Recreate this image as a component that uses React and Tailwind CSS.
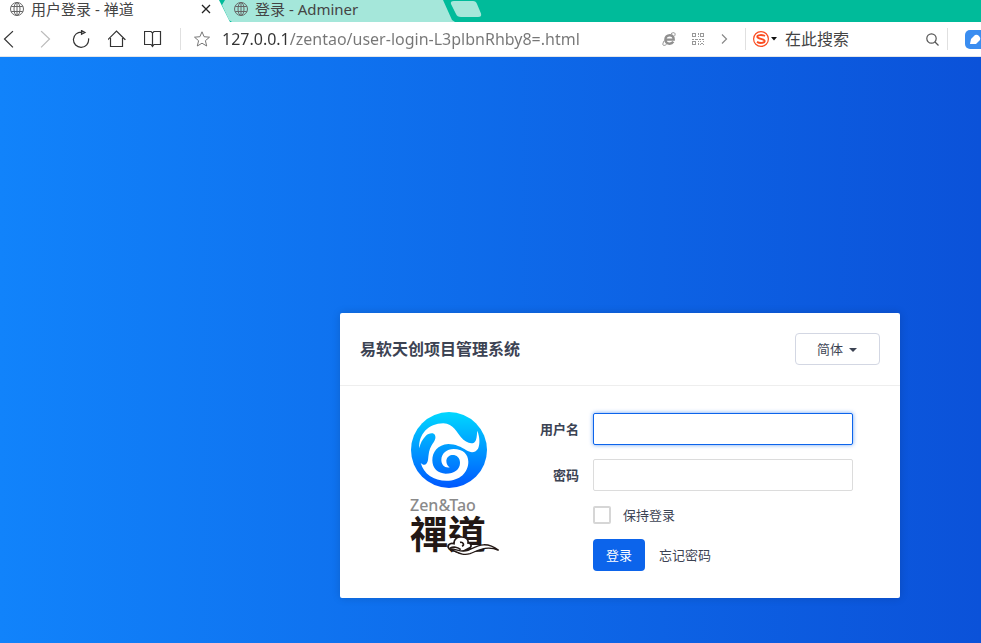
import React, { useState } from 'react';

const iconButton = 'shrink-0 flex items-center justify-center';
const fieldClass = 'w-[260px] h-8 px-2 border rounded-xs bg-white text-[13px] outline-none border-[#dcdcdc] focus:border-[#0c64eb] focus:shadow-[0_0_4px_rgba(12,100,235,0.6)]';

const line = { fill: 'none', stroke: 'currentColor', strokeLinecap: 'square' };

const navIcons = [
  { id: 'back', label: '后退', tone: 'text-[#333]', d: 'M12.5 1.5 4.5 9l8 8' },
  { id: 'forward', label: '前进', tone: 'text-[#bbb]', d: 'M5.5 1.5 13.5 9l-8 8' },
  { id: 'reload', label: '刷新', tone: 'text-[#333]', d: 'M10 2.2A7.6 7.6 0 1 0 16.6 9M9.5.5l3.5 2-3.5 1.8z' },
  { id: 'home', label: '主页', tone: 'text-[#333]', d: 'M0 9.5 8.5 1 17 9.5M2.5 8.5v8h12v-8' },
  { id: 'reader', label: '阅读', tone: 'text-[#333]', d: 'M.5 1.5h6.5l1.5 1.5 1.5-1.5h6.5v13H10l-1.5 2-1.5-2H.5zM8.5 3v13' },
];

function GlobeIcon() {
  return (
    <svg className="w-[14px] h-[14px] shrink-0" viewBox="0 0 14 14" fill="none" stroke="#666">
      <circle cx="7" cy="7" r="6.5" />
      <ellipse cx="7" cy="7" rx="3" ry="6.5" />
      <path d="M7 .5v13M1.2 4.5h11.6M1.2 9.5h11.6" />
    </svg>
  );
}

function TabBar() {
  return (
    <nav className="flex h-[22px] bg-[#00bb9a] text-[15px] leading-[18px] text-[#444] overflow-hidden">
      <div className="w-[230px] shrink-0 flex items-start pl-[10px] bg-white [clip-path:polygon(0_0,219px_0,230px_100%,0_100%)]">
        <a href="#login" className="flex items-center gap-[7px]">
          <GlobeIcon />
          用户登录 - 禅道
        </a>
        <button type="button" aria-label="关闭" className="ml-auto mr-5 h-[18px] flex items-center">
          <svg className="w-2 h-2 overflow-visible" viewBox="0 0 8 8" stroke="#222" strokeWidth="1.3">
            <path d="m0 0 8 8M8 0 0 8" />
          </svg>
        </button>
      </div>
      <a
        href="#adminer"
        className="-ml-3 w-[237px] shrink-0 flex items-start pl-4 bg-[#a5e7da] [clip-path:polygon(7px_0,4px_5px,11px_20px,14px_100%,100%_100%,234px_20px,225px_0)]"
      >
        <span className="flex items-center gap-[7px]">
          <GlobeIcon />
          登录 - Adminer
        </span>
      </a>
      <button type="button" aria-label="新标签页" className="-ml-[5px] h-[17px]">
        <svg className="w-8 h-[17px]" viewBox="0 0 32 17" fill="#a5e7da">
          <path d="M4 1h19q3 0 4 3l4 9.5q1 3.5-3 3.5H11q-4 0-5-3L1 4Q0 1 4 1z" />
        </svg>
      </button>
    </nav>
  );
}

function QrIcon() {
  return (
    <svg className="w-3 h-3" viewBox="0 0 12 12" fill="none" stroke="#999" shapeRendering="crispEdges">
      <path d="M.5.5h3v3h-3zM8.5.5h3v3h-3zM.5 8.5h3v3h-3zM6 0v2M6 3v1M0 6h2M3 6h3M7 6h2M10 6h2M6 8v1M6 10v2M8 8.5h1M11 8.5h1M9 10h2M8 11.5h1M11 11.5h1" />
    </svg>
  );
}

function Toolbar() {
  const [url, setUrl] = useState('127.0.0.1/zentao/user-login-L3plbnRhby8=.html');

  return (
    <div className="flex items-center h-[35px] bg-white border-b border-[#e3e6ea] overflow-hidden">
      <div className="flex gap-[18px] shrink-0">
        {navIcons.map(icon => (
          <button key={icon.id} type="button" aria-label={icon.label} className={icon.tone}>
            <svg className="block w-[18px] h-[18px]" viewBox="0 0 18 18" {...line} strokeWidth="1.2">
              <path d={icon.d} />
            </svg>
          </button>
        ))}
      </div>
      <div className="ml-[18px] w-px h-[22px] shrink-0 bg-[#e0e0e0]" />
      <button type="button" aria-label="收藏" className={`${iconButton} ml-[13px]`}>
        <svg className="w-4 h-4" viewBox="0 0 16 16" fill="none" stroke="#777" strokeLinejoin="round">
          <path d="m8 .8 2.1 4.9 5.4.5-4.1 3.5 1.3 5.3L8 12.2 3.3 15l1.3-5.3L.5 6.2l5.4-.5z" />
        </svg>
      </button>
      <input
        type="text"
        aria-label="地址"
        value={url}
        onChange={e => setUrl(e.target.value)}
        className="ml-3 flex-1 min-w-0 h-7 text-base outline-none text-transparent bg-clip-text bg-[linear-gradient(90deg,#333_67px,#767676_67px)]"
      />
      <div className="flex items-center gap-4 shrink-0 mr-[17px]">
        <button type="button" aria-label="兼容模式" className={iconButton}>
          <svg className="w-[14px] h-[14px]" viewBox="0 0 14 14" fill="none" stroke="#8f8f8f">
            <path d="M3.4 7.6h8.3C11.7 4.7 10 3.2 7.8 3.2 5.2 3.2 3.4 5.1 3.4 7.6 3.4 10 5.2 11.7 7.6 11.7c1.7 0 2.9-.7 3.7-2" strokeWidth="2.4" />
            <path d="M9 1.6c2-1.2 3.6-1.2 4 0 .3.8-.1 1.8-.6 2.6M2.4 8.5C.8 11 .5 12.6 1.3 13.2c.7.5 2 .1 3.3-.9" />
          </svg>
        </button>
        <button type="button" aria-label="二维码" className={iconButton}><QrIcon /></button>
        <button type="button" aria-label="更多" className={iconButton}>
          <svg className="w-[8px] h-[10px]" viewBox="0 0 8 10" fill="none" stroke="#888" strokeWidth="1.2">
            <path d="m2 .5 4.5 4.5L2 9.5" />
          </svg>
        </button>
      </div>
      <form className="w-[236px] shrink-0 flex items-center" onSubmit={e => e.preventDefault()}>
        <div className="w-px h-[22px] bg-[#e0e0e0]" />
        <button type="button" aria-label="搜索引擎" className="ml-[7px] shrink-0 flex items-center gap-[2px]">
          <svg className="w-4 h-4" viewBox="0 0 16 16" fill="none" stroke="#fb4c20">
            <circle cx="8" cy="8" r="7.4" strokeWidth="1.2" />
            <path d="M12 5C9.5 3.7 4.3 3.6 4.3 5.8c0 2.4 7.4 1.9 7.4 4.3 0 2.3-5.2 2.3-7.7.8" strokeWidth="1.9" />
          </svg>
          <svg className="w-[6px] h-1" viewBox="0 0 6 4" fill="#111"><path d="M0 0h6L3 3.5z" /></svg>
        </button>
        <input
          type="text"
          aria-label="搜索"
          placeholder="在此搜索"
          className="ml-2 flex-1 min-w-0 h-7 text-base outline-none placeholder:text-[#444]"
        />
        <button type="submit" aria-label="开始搜索" className="shrink-0">
          <svg className="block w-[13px] h-[13px]" viewBox="0 0 13 13" fill="none" stroke="#555" strokeWidth="1.2">
            <circle cx="5.5" cy="5.5" r="4.7" />
            <path d="m9 9 3.5 3.5" />
          </svg>
        </button>
        <div className="ml-2 w-px h-[22px] shrink-0 bg-[#e0e0e0]" />
        <span className="ml-[17px] w-4 h-[19px] shrink-0 overflow-hidden">
          <svg className="w-[20px] h-[19px] max-w-none" viewBox="0 0 20 19">
            <rect width="20" height="19" rx="5" fill="#3a8df0" />
            <path d="m5 14 1-5 4-4q2-1 4 1t1 4l-4 4z" fill="#fff" />
          </svg>
        </span>
      </form>
    </div>
  );
}

function Logo() {
  return (
    <div className="w-[90px]">
      <svg className="block w-[78px] h-[76px] overflow-visible" viewBox="15 15 234 228">
        <defs>
          <linearGradient id="wave" x1="0" y1="0" x2="0" y2="1">
            <stop offset="0" stopColor="#00d8ff" />
            <stop offset="0.5" stopColor="#0098ff" />
            <stop offset="1" stopColor="#0057ff" />
          </linearGradient>
        </defs>
        <circle cx="132" cy="126" r="114" fill="url(#wave)" />
        <path
          fill="#fff"
          d="M43 121C40 80 70 46 115 46C146 48 156 74 168 88C180 102 196 110 207 104C216 98 215 82 217 68C224 86 226 108 219 122C210 136 196 134 184 127C170 117 150 108 130 108C98 110 82 132 82 157C82 181 99 197 122 197C148 197 165 184 165 164C165 134 126 134 124 158C124 168 128 174 134 178C120 181 109 171 109 156C109 136 126 123 146 123C174 123 190 139 190 161C190 194 164 218 125 218C86 218 56 198 47 164C56 174 66 172 69 156C71 138 72 124 80 112C88 100 94 92 90 82C86 72 70 76 62 84C52 94 46 106 43 121z"
        />
      </svg>
      <div className="mt-2 text-base leading-4 font-medium text-[#8a8a8a]">Zen&amp;Tao</div>
      <div className="relative">
        <div className="font-['Liberation_Sans','Noto_Sans_CJK_TC',sans-serif] text-[38px] leading-11 font-bold text-[#231815] whitespace-nowrap" lang="zh-TW">禪道</div>
        <svg className="absolute right-0 bottom-0 w-[60px] h-6" viewBox="0 24 180 72" stroke="#231815" strokeWidth="5">
          <path d="M28 72C18 62 30 52 42 56C42 40 54 34 66 36C80 36 86 46 84 54C96 54 96 68 86 70L60 84z" fill="#fff" />
          <path d="M60 52C70 50 74 60 66 64M30 70C40 64 54 66 62 74" fill="none" />
          <path d="M28 72C50 70 60 84 84 76C108 66 134 44 176 76C140 60 116 76 90 86C64 94 50 78 28 72z" fill="#fff" strokeWidth="4" />
        </svg>
      </div>
    </div>
  );
}

function LoginPanel() {
  const [account, setAccount] = useState('');
  const [password, setPassword] = useState('');

  return (
    <section className="w-[560px] bg-white rounded-xs text-[13px] leading-5 text-[#3c4353] shadow-[0_0_8px_rgba(0,0,0,0.15)]">
      <header className="flex items-center justify-between p-5 border-b border-[#eee]">
        <h1 className="text-base font-bold">易软天创项目管理系统</h1>
        <div className="relative">
          <select aria-label="语言" className="appearance-none block w-[85px] h-8 pl-[21px] border border-[#d3d7e3] rounded-sm bg-white outline-none">
            <option>简体</option>
            <option>繁體</option>
            <option>English</option>
          </select>
          <svg className="absolute right-[23px] top-[15px] w-2 h-1 pointer-events-none" viewBox="0 0 8 4" fill="#3c4353"><path d="M0 0h8L4 4z" /></svg>
        </div>
      </header>
      <div className="flex justify-between pl-[70px] pr-[47px] py-[27px]">
        <Logo />
        <form className="grid grid-cols-[auto_auto] items-center gap-x-[14px] gap-y-[14px]" onSubmit={e => e.preventDefault()}>
          <label htmlFor="account" className="text-right font-bold">用户名</label>
          <input id="account" type="text" autoFocus value={account} onChange={e => setAccount(e.target.value)} className={fieldClass} />
          <label htmlFor="password" className="text-right font-bold">密码</label>
          <input id="password" type="password" value={password} onChange={e => setPassword(e.target.value)} className={fieldClass} />
          <label className="col-start-2 flex items-center gap-3">
            <input type="checkbox" className="appearance-none w-[18px] h-[18px] border-2 border-[#d6d6d6] rounded-xs checked:bg-[#0c64eb]" />
            保持登录
          </label>
          <div className="col-start-2 flex items-center gap-[14px]">
            <button type="submit" className="w-[52px] h-8 rounded-sm bg-[#0c64eb] text-white">登录</button>
            <a href="#reset">忘记密码</a>
          </div>
        </form>
      </div>
    </section>
  );
}

export default function App() {
  return (
    <div className="min-h-screen flex flex-col font-['Noto_Sans','Noto_Sans_CJK_SC',sans-serif]">
      <TabBar />
      <Toolbar />
      <main className="flex-1 flex justify-end items-end pr-[81px] pb-[45px] bg-[linear-gradient(90deg,#1183fb,#0b52d9)]">
        <LoginPanel />
      </main>
    </div>
  );
}
